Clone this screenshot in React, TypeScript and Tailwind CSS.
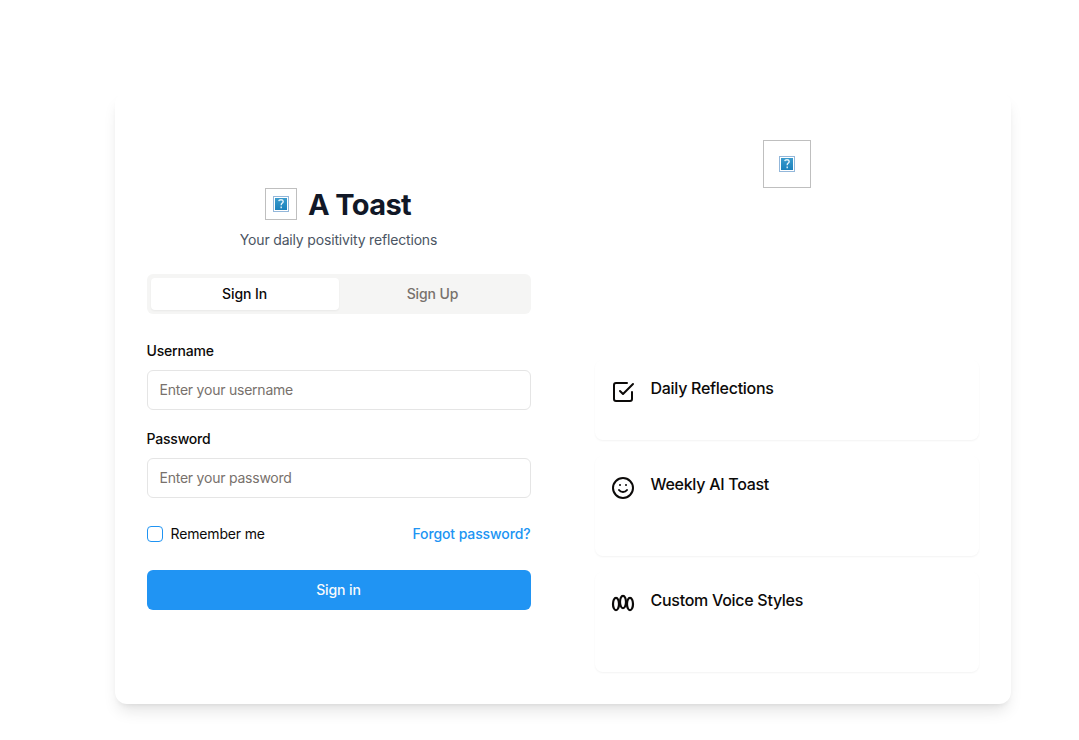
import React from "react";

function MissingImage({ size }: { size: string }) {
  return (
    <span className={`flex shrink-0 items-center justify-center border border-[#bfbfbf] ${size}`}>
      <svg width="16" height="16" viewBox="0 0 16 16">
        <defs>
          <linearGradient id="mark" x1="0" y1="0" x2="0" y2="1">
            <stop offset="0" stopColor="#3a9ccd" />
            <stop offset="1" stopColor="#1a80bb" />
          </linearGradient>
        </defs>
        <rect x="0.5" y="0.5" width="15" height="15" fill="#fff" stroke="#93b7da" />
        <rect x="2" y="2" width="12" height="12" fill="url(#mark)" />
        <path d="M5.7 5.2Q6 3.7 8 3.7t2.2 1.6Q10.2 6.5 9.2 7.1T8.2 9.2M8.2 10.6v1.6" fill="none" stroke="#e4f2fa" strokeWidth="1.4" />
      </svg>
    </span>
  );
}

function Field({ label, placeholder, type }: { label: string; placeholder: string; type: string }) {
  return (
    <label className="flex flex-col gap-[9px]">
      <span className="-ml-[0.5px] text-sm leading-5 font-medium tracking-[-0.2px]">{label}</span>
      <input
        type={type}
        placeholder={placeholder}
        className="h-10 w-full rounded-md border border-[#e5e5e5] bg-white px-[11.5px] pb-0.5 text-sm tracking-[-0.23px] placeholder:text-[#78716c]"
      />
    </label>
  );
}

function Feature({ title, height, children }: { title: string; height: string; children: React.ReactNode }) {
  return (
    <div className={`flex items-start gap-[15.5px] rounded-lg p-4 shadow-[0_1px_2px_0_rgba(0,0,0,0.05)] ${height}`}>
      <svg className="mt-1" width="24" height="24" viewBox="0 0 24 24" fill="none" stroke="currentColor" strokeWidth="2" strokeLinecap="round" strokeLinejoin="round">
        {children}
      </svg>
      <h3 className="text-base font-medium tracking-[-0.28px]">{title}</h3>
    </div>
  );
}

export default function App() {
  return (
    <main className="h-[740px] w-full overflow-hidden bg-white pt-[92px] pl-[115px] font-['Inter',sans-serif] text-[#0c0a09]">
      <div className="grid h-[612px] w-[896px] grid-cols-2 rounded-xl bg-white shadow-lg">
        <section className="flex flex-col px-8 pt-[94px]">
          <div className="flex h-9 items-center justify-center gap-[11px] pr-0.5">
            <MissingImage size="size-8" />
            <h1 className="pt-px text-[29px] leading-9 font-bold tracking-[-0.6px] text-[#111827]">A Toast</h1>
          </div>
          <p className="mt-2 pr-px text-center text-sm tracking-[-0.17px] text-[#4b5563]">Your daily positivity reflections</p>
          <div className="mt-6 grid h-10 grid-cols-2 rounded-md bg-[#f5f5f4] p-1 text-sm font-medium tracking-[-0.1px] text-[#78716c]">
            <button className="rounded-sm bg-white pr-px text-[#0c0a09] shadow-[0_1px_2px_0_rgba(0,0,0,0.05)]">Sign In</button>
            <button className="pr-px">Sign Up</button>
          </div>
          <form className="mt-[27px] flex flex-col">
            <Field label="Username" placeholder="Enter your username" type="text" />
            <div className="h-[19px]" />
            <Field label="Password" placeholder="Enter your password" type="password" />
            <div className="mt-[26px] flex h-5 items-center justify-between pr-[0.5px] text-sm tracking-[-0.15px]">
              <label className="flex items-center gap-[7.5px]">
                <span className="size-4 rounded border border-[#2094f3]" />
                Remember me
              </label>
              <a className="font-medium tracking-[-0.11px] text-[#2094f3]">Forgot password?</a>
            </div>
            <button type="button" className="mt-[26px] h-10 rounded-md bg-[#2094f3] pr-px text-sm font-medium tracking-[-0.1px] text-[#f8fafc]">Sign in</button>
          </form>
        </section>
        <section className="flex flex-col px-8 pt-12">
          <div className="flex justify-center">
            <MissingImage size="size-12" />
          </div>
          <div className="mt-[172px] flex flex-col gap-4">
            <Feature title="Daily Reflections" height="h-20">
              <path d="m9 11 3 3L22 4" />
              <path d="M21 12v7a2 2 0 0 1-2 2H5a2 2 0 0 1-2-2V5a2 2 0 0 1 2-2h11" />
            </Feature>
            <Feature title="Weekly AI Toast" height="h-[100px]">
              <circle cx="12" cy="12" r="10" />
              <path d="M8 14s1.5 2 4 2 4-2 4-2M9 9h.01M15 9h.01" />
            </Feature>
            <Feature title="Custom Voice Styles" height="h-[100px]">
              <ellipse cx="5" cy="12" rx="3" ry="6.2" strokeWidth="2.2" />
              <ellipse cx="12" cy="10" rx="3" ry="6.2" strokeWidth="2.2" />
              <ellipse cx="19" cy="12" rx="3" ry="6.2" strokeWidth="2.2" />
            </Feature>
          </div>
        </section>
      </div>
    </main>
  );
}
